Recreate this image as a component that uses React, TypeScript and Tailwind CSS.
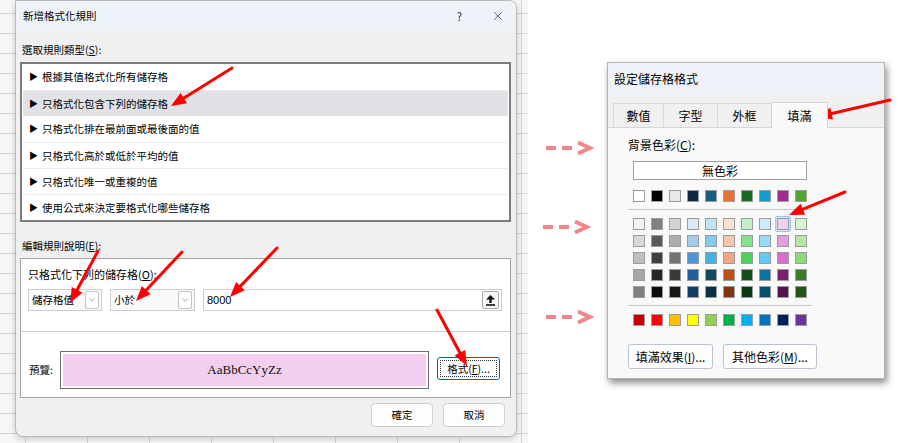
import { X, ChevronDown } from "lucide-react";

const RULES = [
  "根據其值格式化所有儲存格",
  "只格式化包含下列的儲存格",
  "只格式化排在最前面或最後面的值",
  "只格式化高於或低於平均的值",
  "只格式化唯一或重複的值",
  "使用公式來決定要格式化哪些儲存格",
];

const THEME = ["#ffffff", "#000000", "#e8e8e8", "#0e2841", "#156082", "#e97132", "#196b24", "#0f9ed5", "#a02b93", "#4ea72e"];
const TINTS = [
  ["#f2f2f2", "#7f7f7f", "#d1d1d1", "#dceaf7", "#c0e4f5", "#fbe2d5", "#c1f0c8", "#caeefb", "#f2cfee", "#daf2d0"],
  ["#d9d9d9", "#595959", "#aeaeae", "#a6caec", "#83cbeb", "#f7c7ac", "#84e291", "#95dcf7", "#e49edd", "#b5e6a2"],
  ["#bfbfbf", "#404040", "#747474", "#4e95d9", "#44b3e1", "#f1a983", "#47d459", "#61cbf3", "#d86dcd", "#8ed973"],
  ["#a6a6a6", "#262626", "#3a3a3a", "#215f9a", "#104862", "#c04f15", "#124f1a", "#0b76a0", "#77206d", "#3b7d23"],
  ["#808080", "#0d0d0d", "#171717", "#153d64", "#0b3041", "#80350e", "#0c3511", "#074f6a", "#501549", "#275317"],
];
const STANDARD = ["#c00000", "#ff0000", "#ffc000", "#ffff00", "#92d050", "#00b050", "#00b0f0", "#0070c0", "#002060", "#7030a0"];

function Swatch({ color, selected }: { color: string; selected?: boolean }) {
  return (
    <div
      className={`w-[16px] h-[16px] flex items-center justify-center rounded-[2px] ${
        selected ? "bg-[#cce4f7] border border-[#99c9ef]" : ""
      }`}
    >
      <div className="w-[12px] h-[12px] border border-[#9c9c9c]" style={{ backgroundColor: color }} />
    </div>
  );
}

function SwatchRow({ colors, selectedIdx = -1 }: { colors: string[]; selectedIdx?: number }) {
  return (
    <div className="flex gap-[2px]">
      {colors.map((c, i) => (
        <Swatch key={i} color={c} selected={i === selectedIdx} />
      ))}
    </div>
  );
}

function RedArrow({ x1, y1, x2, y2 }: { x1: number; y1: number; x2: number; y2: number }) {
  const dx = x2 - x1;
  const dy = y2 - y1;
  const len = Math.hypot(dx, dy);
  const ux = dx / len;
  const uy = dy / len;
  const hl = 15;
  const hw = 6;
  const bx = x2 - ux * hl;
  const by = y2 - uy * hl;
  const px = -uy;
  const py = ux;
  return (
    <g>
      <line x1={x1} y1={y1} x2={bx + ux * 3} y2={by + uy * 3} stroke="#ff0000" strokeWidth={3} strokeLinecap="round" />
      <polygon
        points={`${x2},${y2} ${bx + px * hw},${by + py * hw} ${bx - px * hw},${by - py * hw}`}
        fill="#ff0000"
      />
    </g>
  );
}

function DashArrow({ className }: { className: string }) {
  return (
    <svg width="48" height="16" viewBox="0 0 48 16" className={className}>
      <rect x="0" y="6" width="10" height="4" fill="#f28585" />
      <rect x="16" y="6" width="10" height="4" fill="#f28585" />
      <polyline points="32,2.5 44,8 32,13.5" fill="none" stroke="#f28585" strokeWidth="4" strokeLinejoin="miter" />
    </svg>
  );
}

function UpButton() {
  return (
    <div className="w-[17px] h-[18px] mr-[2px] border border-[#a8a8a8] rounded-[2px] bg-[#f7f7f7] flex items-center justify-center">
      <svg width="9" height="11" viewBox="0 0 9 11">
        <polygon points="4.5,0 9,4.5 0,4.5" fill="#111" />
        <rect x="3.3" y="4" width="2.4" height="4" fill="#111" />
        <rect x="0" y="9.2" width="9" height="1.6" fill="#111" />
      </svg>
    </div>
  );
}

function Dropdown({ value, width }: { value: string; width: string }) {
  return (
    <div className={`${width} h-[22px] border border-[#cdcdcd] bg-[#fafafa] flex items-center pl-[3px] pr-[2px]`}>
      <span className="flex-1">{value}</span>
      <div className="w-[14px] h-[18px] border border-[#c4c4c4] bg-white rounded-[2px] flex items-center justify-center">
        <ChevronDown size={10} strokeWidth={1.2} className="text-[#555]" />
      </div>
    </div>
  );
}

function NewRuleDialog() {
  return (
    <div className="w-[502px] h-[437px] flex flex-col bg-[#f0f0f0] border border-[#b9b9b9] rounded-tr-[8px] rounded-b-[8px] shadow-[0_2px_6px_rgba(0,0,0,0.18)] text-[10.5px] text-black overflow-hidden">
      {/* Title bar */}
      <div className="h-[30px] shrink-0 bg-[#eef3f9] flex items-center pl-[7px] pr-[11px]">
        <span className="text-[10.5px]">新增格式化規則</span>
        <span className="ml-auto text-[11px] text-[#222]">?</span>
        <X size={14} strokeWidth={1.2} className="ml-[29px] text-[#222]" />
      </div>

      <div className="flex flex-col pl-[4px]">
        <div className="mt-[11px] h-[16px] leading-[16px] pl-[2px]">
          選取規則類型(<u>S</u>):
        </div>

        {/* Rule type list */}
        <div className="mt-[4px] w-[491px] h-[160px] border-2 border-[#7c7c7c] bg-white flex flex-col">
          {RULES.map((r, i) => (
            <div
              key={r}
              className={`h-[26px] shrink-0 flex items-center pl-[6px] mx-[1px] ${
                i === 1 ? "bg-[#e1e1e6]" : ""
              } ${i > 0 && i !== 2 ? "border-t border-[#ececec]" : ""}`}
            >
              <span className="text-[9px] mr-[4px]">▶</span>
              <span>{r}</span>
            </div>
          ))}
        </div>

        <div className="mt-[16px] h-[16px] leading-[16px] pl-[2px]">
          編輯規則說明(<u>E</u>):
        </div>

        {/* Rule description group */}
        <div className="mt-[4px] w-[491px] h-[140px] border border-[#a3a3a3] bg-white flex flex-col">
          <div className="h-[72px] shrink-0 pl-[7px] pt-[7px] flex flex-col">
            <div className="h-[16px] leading-[16px] text-[11px]">
              只格式化下列的儲存格(<u>O</u>):
            </div>
            <div className="mt-[7px] flex items-center">
              <Dropdown value="儲存格值" width="w-[74px]" />
              <div className="ml-[8px]">
                <Dropdown value="小於" width="w-[85px]" />
              </div>
              <div className="ml-[8px] w-[299px] h-[22px] border border-[#cdcdcd] bg-white flex items-center pl-[3px]">
                <span className="flex-1 font-['Liberation_Sans',sans-serif] text-[11px]">8000</span>
                <UpButton />
              </div>
            </div>
          </div>
          <div className="h-px bg-[#cfcfcf]" />
          <div className="flex-1 flex items-start pt-[19px] pl-[8px]">
            <div className="w-[31px] h-[38px] flex items-center">預覽:</div>
            <div className="w-[369px] h-[38px] border border-[#6e6e6e] p-[2px] bg-white">
              <div className="h-full bg-[#f2cfee] flex items-center justify-center font-['Liberation_Serif',serif] text-[13px] text-[#111]">
                AaBbCcYyZz
              </div>
            </div>
            <div className="ml-[8px] mt-[6px] w-[63px] h-[23px] border border-[#0067c0] rounded-[3px] bg-white p-[2px]">
              <div className="h-full border border-dotted border-[#333] flex items-center justify-center">
                格式(<u>F</u>)...
              </div>
            </div>
          </div>
        </div>

        {/* OK / Cancel */}
        <div className="mt-[5px] flex justify-end pr-[11px] gap-[10px]">
          <div className="w-[62px] h-[24px] bg-[#fdfdfd] border border-[#d0d0d0] rounded-[4px] flex items-center justify-center">
            確定
          </div>
          <div className="w-[62px] h-[24px] bg-[#fdfdfd] border border-[#d0d0d0] rounded-[4px] flex items-center justify-center">
            取消
          </div>
        </div>
      </div>
    </div>
  );
}

function FormatCellsDialog() {
  const tabs = ["數值", "字型", "外框", "填滿"];
  const widths = ["w-[51px]", "w-[55px]", "w-[55px]", "w-[57px]"];
  return (
    <div className="w-[278px] h-[317px] flex flex-col border border-[#b3b3b3] bg-[#f9f9f9] shadow-[2px_4px_7px_rgba(0,0,0,0.45)] text-[12px] text-black">
      <div className="h-[31px] shrink-0 bg-[#eef2f8] flex items-center pl-[6px]">設定儲存格格式</div>
      <div className="h-[33px] shrink-0 bg-[#f0f0f0] flex items-end pl-[5px]">
        {tabs.map((t, i) =>
          i === 3 ? (
            <div
              key={t}
              className={`${widths[i]} -ml-px h-[26px] relative z-10 -mb-px bg-[#f9f9f9] border border-b-0 border-[#d5d5d5] flex items-center justify-center`}
            >
              {t}
            </div>
          ) : (
            <div
              key={t}
              className={`${widths[i]} ${i > 0 ? "-ml-px" : ""} h-[24px] bg-[#f0f0f0] border border-b-0 border-[#d8d8d8] flex items-center justify-center`}
            >
              {t}
            </div>
          )
        )}
      </div>
      <div className="flex-1 border-t border-[#d5d5d5] pl-[20px] pt-[9px] flex flex-col">
        <div className="h-[16px] leading-[16px]">
          背景色彩(<u>C</u>):
        </div>
        <div className="mt-[8px] ml-[5px] w-[174px] h-[19px] border border-[#a0a0a0] bg-white flex items-center justify-center">
          無色彩
        </div>
        <div className="ml-[3px] mt-[8px]">
          <SwatchRow colors={THEME} />
        </div>
        <div className="mt-[5px] w-[184px] h-px bg-[#c8c8c8]" />
        <div className="ml-[3px] mt-[6px] flex flex-col gap-[1px]">
          {TINTS.map((row, i) => (
            <SwatchRow key={i} colors={row} selectedIdx={i === 0 ? 8 : -1} />
          ))}
        </div>
        <div className="mt-[5px] w-[184px] h-px bg-[#c8c8c8]" />
        <div className="ml-[3px] mt-[6px]">
          <SwatchRow colors={STANDARD} />
        </div>
        <div className="mt-[16px] flex gap-[10px]">
          <div className="w-[85px] h-[25px] bg-white border border-[#b9c4d0] rounded-[3px] flex items-center justify-center">
            填滿效果(<u>I</u>)...
          </div>
          <div className="w-[94px] h-[25px] bg-white border border-[#b9c4d0] rounded-[3px] flex items-center justify-center">
            其他色彩(<u>M</u>)...
          </div>
        </div>
      </div>
    </div>
  );
}

export default function App() {
  return (
    <div className="relative flex w-[911px] h-[443px] bg-white overflow-hidden font-['Noto_Sans_CJK_TC','Noto_Sans_CJK_SC',sans-serif]">
      {/* Spreadsheet backdrop + rule dialog */}
      <div className="w-[528px] h-full shrink-0 pl-[15px] bg-[#f6f6f6] bg-[linear-gradient(to_right,#d4d4d4_1px,transparent_1px),linear-gradient(to_bottom,#d4d4d4_1px,transparent_1px)] bg-[size:62px_20px] bg-[position:25px_13px]">
        <NewRuleDialog />
      </div>

      {/* Dashed arrows */}
      <div className="w-[79px] shrink-0 flex flex-col pt-[140px]">
        <DashArrow className="ml-[18px]" />
        <DashArrow className="ml-[15px] mt-[63px]" />
        <DashArrow className="ml-[18px] mt-[74px]" />
      </div>

      {/* Format cells dialog */}
      <div className="pt-[62px]">
        <FormatCellsDialog />
      </div>

      {/* Red annotation arrows */}
      <svg className="absolute inset-0 pointer-events-none" width="911" height="443" viewBox="0 0 911 443">
        <RedArrow x1={232} y1={68} x2={171} y2={106} />
        <RedArrow x1={98} y1={251} x2={70} y2={303} />
        <RedArrow x1={182} y1={252} x2={136} y2={301} />
        <RedArrow x1={277} y1={248} x2={230} y2={297} />
        <RedArrow x1={437} y1={310} x2={467} y2={366} />
        <RedArrow x1={890} y1={100} x2={817} y2={117} />
        <RedArrow x1={845} y1={192} x2={789} y2={215} />
      </svg>
    </div>
  );
}
